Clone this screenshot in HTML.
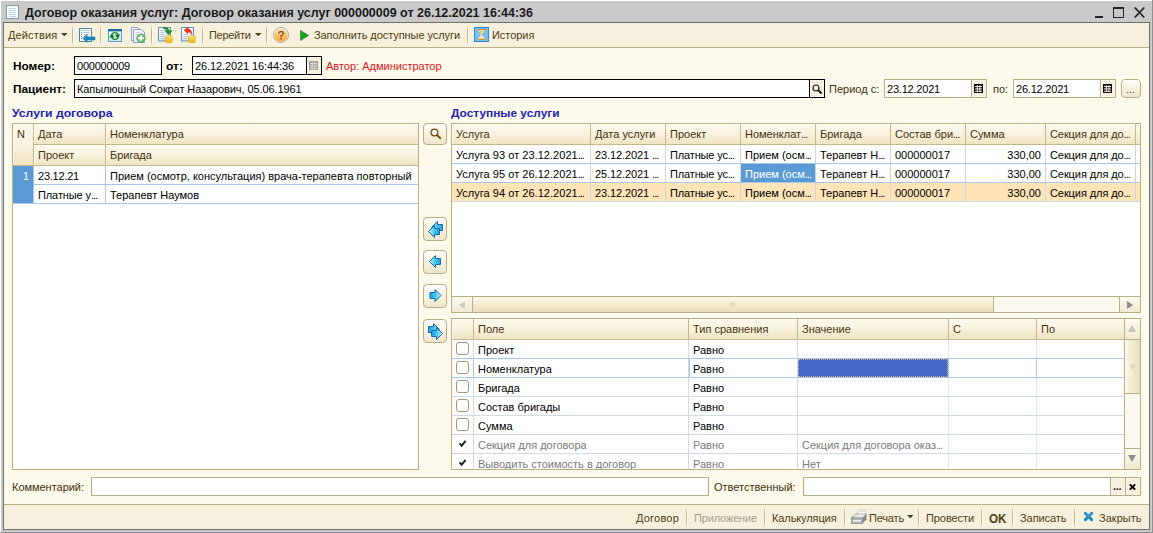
<!DOCTYPE html>
<html><head><meta charset="utf-8"><title>Договор оказания услуг</title>
<style>
*{box-sizing:border-box;margin:0;padding:0}
html,body{width:1153px;height:533px;overflow:hidden;background:#c8c8c8}
body{font-family:"Liberation Sans",sans-serif;font-size:11px;color:#000;position:relative}
.a{position:absolute}
.t{position:absolute;white-space:nowrap;line-height:13px;height:13px}
.b{font-weight:bold;letter-spacing:.45px}
.inp{position:absolute;background:#fff;border:1px solid #000}
.inp2{position:absolute;background:#fff;border:1px solid #b7ae84}
.hdr{position:absolute;background:linear-gradient(#fcf9ec 0%,#f8f2de 50%,#efe4c2 100%);box-shadow:inset 1px 1px 0 rgba(255,255,255,.7)}
.ht{color:#44320e}
.btn{position:absolute;border:1px solid #b8ae88;border-radius:4px;background:linear-gradient(#fffefa,#f7f1de 50%,#efe6cb);box-shadow:inset 0 1px 0 #fff}
.sep{position:absolute;width:1px;background:#d2c8a4}
.cb{position:absolute;width:13px;height:13px;border:1px solid #a0977a;border-radius:3px;background:#fff}
.tb{color:#4d3d12}
svg{position:absolute;overflow:visible}
</style></head><body>
<div class="a" style="left:0px;top:0px;width:1153px;height:533px;background:#c9c9c9;"></div>
<div class="a" style="left:0px;top:0px;width:1153px;height:1px;background:#ffffff;"></div>
<div class="a" style="left:0px;top:0px;width:1px;height:533px;background:#ffffff;"></div>
<div class="a" style="left:3px;top:22px;width:1147px;height:508px;background:#fcfaeb;border:1px solid #6f6f6f"></div>
<div class="a" style="left:1152px;top:0px;width:1px;height:533px;background:#909090;"></div>
<div class="a" style="left:0px;top:532px;width:1153px;height:1px;background:#909090;"></div>
<svg style="left:6px;top:5px" width="14" height="15" viewBox="0 0 14 15"><rect x="0.500" y="0.500" width="12" height="13" fill="#fdfeff" stroke="#8298b0"/><path d="M3 3.500h7M3 5.500h7M3 7.500h7M3 9.500h7M3 11.500h7" stroke="#bcd4e8" stroke-width="1"/></svg>
<div class="t " style="left:25px;top:6px;letter-spacing:0;transform:scaleX(1.0407);transform-origin:0 0;font-weight:bold;font-size:12px;line-height:15px;height:15px;color:#1a1a1a">Договор оказания услуг: Договор оказания услуг 000000009 от 26.12.2021 16:44:36</div>
<div class="a" style="left:1095px;top:16px;width:8px;height:2px;background:#222;"></div>
<div class="a" style="left:1113px;top:7px;width:11px;height:11px;background:transparent;border:1px solid #222;border-top:2px solid #222"></div>
<svg style="left:1134px;top:7px" width="11" height="11" viewBox="0 0 11 11"><path d="M0.700 0.500L10.300 10.500M10.300 0.500L0.700 10.500" stroke="#222" stroke-width="1.8" fill="none"/></svg>
<div class="a" style="left:4px;top:23px;width:1145px;height:24px;background:#f6f1dd;"></div>
<div class="a" style="left:4px;top:47px;width:1145px;height:1px;background:#b9b088;"></div>
<div class="t tb" style="left:8px;top:29px;letter-spacing:0.137px;">Действия</div>
<svg style="left:61px;top:33px" width="7" height="4" viewBox="0 0 7 4"><path d="M0 0h6.600L3.300 3.300z" fill="#4d3d12"/></svg>
<div class="a" style="left:72px;top:25px;width:1px;height:21px;background:linear-gradient(rgba(196,182,134,0),#c4b686 25%,#c4b686 75%,rgba(196,182,134,0));"></div>
<div class="a" style="left:73px;top:25px;width:1px;height:21px;background:linear-gradient(rgba(255,255,255,0),#fffdf5 25%,#fffdf5 75%,rgba(255,255,255,0));"></div>
<div class="a" style="left:100px;top:25px;width:1px;height:21px;background:linear-gradient(rgba(196,182,134,0),#c4b686 25%,#c4b686 75%,rgba(196,182,134,0));"></div>
<div class="a" style="left:101px;top:25px;width:1px;height:21px;background:linear-gradient(rgba(255,255,255,0),#fffdf5 25%,#fffdf5 75%,rgba(255,255,255,0));"></div>
<div class="a" style="left:151px;top:25px;width:1px;height:21px;background:linear-gradient(rgba(196,182,134,0),#c4b686 25%,#c4b686 75%,rgba(196,182,134,0));"></div>
<div class="a" style="left:152px;top:25px;width:1px;height:21px;background:linear-gradient(rgba(255,255,255,0),#fffdf5 25%,#fffdf5 75%,rgba(255,255,255,0));"></div>
<div class="a" style="left:202px;top:25px;width:1px;height:21px;background:linear-gradient(rgba(196,182,134,0),#c4b686 25%,#c4b686 75%,rgba(196,182,134,0));"></div>
<div class="a" style="left:203px;top:25px;width:1px;height:21px;background:linear-gradient(rgba(255,255,255,0),#fffdf5 25%,#fffdf5 75%,rgba(255,255,255,0));"></div>
<div class="a" style="left:266px;top:25px;width:1px;height:21px;background:linear-gradient(rgba(196,182,134,0),#c4b686 25%,#c4b686 75%,rgba(196,182,134,0));"></div>
<div class="a" style="left:267px;top:25px;width:1px;height:21px;background:linear-gradient(rgba(255,255,255,0),#fffdf5 25%,#fffdf5 75%,rgba(255,255,255,0));"></div>
<div class="a" style="left:467px;top:25px;width:1px;height:21px;background:linear-gradient(rgba(196,182,134,0),#c4b686 25%,#c4b686 75%,rgba(196,182,134,0));"></div>
<div class="a" style="left:468px;top:25px;width:1px;height:21px;background:linear-gradient(rgba(255,255,255,0),#fffdf5 25%,#fffdf5 75%,rgba(255,255,255,0));"></div>
<div class="t tb" style="left:209px;top:29px;letter-spacing:-0.299px;">Перейти</div>
<svg style="left:255px;top:33px" width="7" height="4" viewBox="0 0 7 4"><path d="M0 0h6.600L3.300 3.300z" fill="#4d3d12"/></svg>
<div class="t tb" style="left:314px;top:29px;letter-spacing:-0.070px;">Заполнить доступные услуги</div>
<div class="t tb" style="left:492px;top:29px;letter-spacing:-0.053px;">История</div>
<svg style="left:78px;top:27px" width="18" height="17" viewBox="0 0 18 17"><rect x="1.500" y="1.500" width="12" height="13" fill="#fbfdfe" stroke="#4f82ab"/><path d="M5.500 3.500h6M5.500 5.500h6M5.500 7.500h6M5.500 9.500h6M5.500 11.500h6" stroke="#b9c6d2"/><path d="M3 3.500h1.200M3 5.500h1.200M3 7.500h1.200M3 9.500h1.200M3 11.500h1.200" stroke="#3f8fd0"/><path d="M5 11.500L9 7.500V10H17V13H9V15.500z" fill="#1b86bf" stroke="#13709f" stroke-width=".5"/></svg>
<svg style="left:108px;top:29px" width="14" height="13" viewBox="0 0 14 13"><defs><linearGradient id="g2" x1="0" y1="0" x2="0" y2="1"><stop offset="0" stop-color="#ffffff"/><stop offset="1" stop-color="#cfe3f3"/></linearGradient></defs><rect x="0.500" y="0.500" width="13" height="12" fill="url(#g2)" stroke="#5e9ccd"/><rect x="0" y="0" width="14" height="2.400" fill="#1c6c9e"/><circle cx="7" cy="7" r="3.300" fill="none" stroke="#1d8a2c" stroke-width="1.200"/><path d="M1.200 8.400h5.400L3.900 4.400z" fill="#0b7a1c"/><path d="M6.800 5.500h5.400L9.500 9.400z" fill="#0b7a1c"/></svg>
<svg style="left:131px;top:27px" width="15" height="17" viewBox="0 0 15 17"><defs><linearGradient id="g3" x1="0" y1="0" x2="1" y2="1"><stop offset="0" stop-color="#ffffff"/><stop offset="1" stop-color="#d5e3ef"/></linearGradient></defs><path d="M0.500 0.500h6l2.500 2.500v10.500h-8.500z" fill="url(#g3)" stroke="#8aa4bf"/><path d="M2.500 2.500h8l3 3v10h-11z" fill="url(#g3)" stroke="#8aa4bf"/><path d="M4.500 5.500h4M4.500 7.500h3" stroke="#c3d0dc"/><circle cx="10" cy="11.300" r="4.200" fill="#68c068" stroke="#6f9a72" stroke-width=".9"/><path d="M10 8.500v5.600M7.200 11.300h5.600" stroke="#fff" stroke-width="2.100"/></svg>
<svg style="left:158px;top:27px" width="16" height="17" viewBox="0 0 16 17"><defs><linearGradient id="gd" x1="0" y1="0" x2="0" y2="1"><stop offset="0" stop-color="#ffffff"/><stop offset="1" stop-color="#d6e4ee"/></linearGradient></defs><rect x="0.500" y="0.500" width="12" height="13.500" fill="url(#gd)" stroke="#6c95b6"/><path d="M2.500 3.500h5M2.500 5.500h4M2.500 7.500h4M2.500 9.500h4M2.500 11.500h4" stroke="#b2c4d4"/><path d="M5.500 0.300C9 0 10.900 1.500 11.100 3.700H14.300L10.500 8.100 6.800 3.700H9C8.800 2.500 7.500 1.700 5.500 1.700z" fill="#15982a" stroke="#0c7a1c" stroke-width=".4"/><ellipse cx="10.900" cy="14.300" rx="3.600" ry="1.600" fill="#f9c422" stroke="#d9a012" stroke-width=".6"/><ellipse cx="10.900" cy="12.300" rx="3.600" ry="1.600" fill="#ffd535" stroke="#d9a012" stroke-width=".6"/><ellipse cx="10.900" cy="10.300" rx="3.600" ry="1.600" fill="#ffe25c" stroke="#d9a012" stroke-width=".6"/></svg>
<svg style="left:181px;top:27px" width="16" height="17" viewBox="0 0 16 17"><defs><linearGradient id="gd" x1="0" y1="0" x2="0" y2="1"><stop offset="0" stop-color="#ffffff"/><stop offset="1" stop-color="#d6e4ee"/></linearGradient></defs><rect x="0.500" y="0.500" width="12" height="13.500" fill="url(#gd)" stroke="#6c95b6"/><path d="M2.500 7.500h4M2.500 9.500h4M2.500 11.500h4" stroke="#b2c4d4"/><path d="M3 3.300L7 0V2C9.900 2 11.100 4.500 10.800 7.700 10 5.700 8.800 4.900 7 4.900V6.800z" fill="#f2341c" stroke="#d42410" stroke-width=".4"/><ellipse cx="10.900" cy="14.300" rx="3.600" ry="1.600" fill="#f9c422" stroke="#d9a012" stroke-width=".6"/><ellipse cx="10.900" cy="12.300" rx="3.600" ry="1.600" fill="#ffd535" stroke="#d9a012" stroke-width=".6"/><ellipse cx="10.900" cy="10.300" rx="3.600" ry="1.600" fill="#ffe25c" stroke="#d9a012" stroke-width=".6"/></svg>
<svg style="left:273px;top:27px" width="16" height="16" viewBox="0 0 16 16"><defs><linearGradient id="hg" x1="0" y1="0" x2="0" y2="1"><stop offset="0" stop-color="#ffe6c0"/><stop offset=".55" stop-color="#ffc46e"/><stop offset="1" stop-color="#ff9f2e"/></linearGradient></defs><circle cx="8" cy="8" r="7.500" fill="#fff" stroke="#a3a3aa" stroke-width=".9"/><circle cx="8" cy="8" r="6.800" fill="url(#hg)"/><text x="8" y="12" text-anchor="middle" font-family="Liberation Sans,sans-serif" font-size="11" fill="#7a4a22" stroke="#7a4a22" stroke-width=".35">?</text></svg>
<svg style="left:300px;top:30px" width="9" height="11" viewBox="0 0 9 11"><path d="M0.500 0.500L8.700 5.500 0.500 10.500z" fill="#11ab11" stroke="#4f6f4f" stroke-width=".7"/></svg>
<svg style="left:474px;top:27px" width="15" height="15" viewBox="0 0 15 15"><rect x="0.500" y="0.500" width="14" height="14" fill="#7cc0ea" stroke="#2a8be0"/><path d="M4.500 3h6v1.200L8.200 7.200v.8l2.300 2.800V12h-6v-1.200L6.800 8v-.8L4.500 4.200z" fill="#f4f4ee" stroke="#9a9a90" stroke-width=".4"/><path d="M5.300 4h4.400L7.500 7.200zM6 11.500l1.500-2 1.500 2z" fill="#d6d236"/><path d="M4 2.500h7M4 12.500h7" stroke="#e08a1c" stroke-width="1.200"/></svg>
<div class="t b" style="left:13px;top:60px;letter-spacing:0;transform:scaleX(1.0726);transform-origin:0 0;">Номер:</div>
<div class="a" style="left:74px;top:56px;width:88px;height:19px;background:#fff;border:1px solid #000"></div>
<div class="t " style="left:77px;top:60px;letter-spacing:-0.229px;">000000009</div>
<div class="t b" style="left:166px;top:60px;letter-spacing:0;transform:scaleX(1.0968);transform-origin:0 0;">от:</div>
<div class="a" style="left:192px;top:56px;width:130px;height:19px;background:#fff;border:1px solid #000"></div>
<div class="t " style="left:195px;top:60px;letter-spacing:-0.102px;">26.12.2021 16:44:36</div>
<div class="a" style="left:306px;top:57px;width:15px;height:17px;background:#f5f0de;border-left:1px solid #000;box-shadow:inset 1px 1px 0 #faf7ea,inset -1px -1px 0 #faf7ea"></div>
<svg style="left:309px;top:61px" width="9" height="9" viewBox="0 0 9 9"><rect x="0" y="0" width="9" height="9" fill="#a2a2a2"/><path d="M3.300 1v7.500M5.900 1v7.500M1 2.500h7M1 4.900h7M1 7.300h7" stroke="#d9d9d9" stroke-width=".9"/></svg>
<div class="t " style="left:326px;top:60px;color:#e0141e">Автор: Администратор</div>
<div class="t b" style="left:13px;top:83px;letter-spacing:0;transform:scaleX(1.0734);transform-origin:0 0;">Пациент:</div>
<div class="a" style="left:74px;top:79px;width:751px;height:19px;background:#fff;border:1px solid #000"></div>
<div class="t " style="left:77px;top:83px;letter-spacing:-0.096px;">Капылюшный Сократ Назарович, 05.06.1961</div>
<div class="a" style="left:809px;top:80px;width:15px;height:17px;background:#f5f0de;border-left:1px solid #000;box-shadow:inset 1px 1px 0 #faf7ea,inset -1px -1px 0 #faf7ea"></div>
<svg style="left:811.500px;top:83.500px" width="11" height="11" viewBox="0 0 11 11"><circle cx="4" cy="4" r="3" fill="none" stroke="#111" stroke-width="1.200"/><path d="M6.200 6.200L9.500 9.500" stroke="#111" stroke-width="1.800"/></svg>
<div class="t " style="left:829px;top:83px;color:#3f3012">Период с:</div>
<div class="a" style="left:884px;top:79px;width:103px;height:19px;background:#fff;border:1px solid #b7ae84"></div>
<div class="t " style="left:887px;top:83px;letter-spacing:-0.206px;">23.12.2021</div>
<div class="a" style="left:971px;top:80px;width:15px;height:17px;background:#f5f0de;border-left:1px solid #b7ae84;box-shadow:inset 1px 1px 0 #faf7ea,inset -1px -1px 0 #faf7ea"></div>
<svg style="left:974px;top:84px" width="9" height="9" viewBox="0 0 9 9"><rect x="0" y="0" width="9" height="9" fill="#0a0a0a"/><path d="M3.300 1.200v7M5.900 1.200v7M1 2.500h7M1 4.900h7M1 7.300h7" stroke="#fff" stroke-width=".9"/></svg>
<div class="t " style="left:993px;top:83px;color:#3f3012">по:</div>
<div class="a" style="left:1013px;top:79px;width:103px;height:19px;background:#fff;border:1px solid #b7ae84"></div>
<div class="t " style="left:1016px;top:83px;letter-spacing:-0.206px;">26.12.2021</div>
<div class="a" style="left:1100px;top:80px;width:15px;height:17px;background:#f5f0de;border-left:1px solid #b7ae84;box-shadow:inset 1px 1px 0 #faf7ea,inset -1px -1px 0 #faf7ea"></div>
<svg style="left:1103px;top:84px" width="9" height="9" viewBox="0 0 9 9"><rect x="0" y="0" width="9" height="9" fill="#0a0a0a"/><path d="M3.300 1.200v7M5.900 1.200v7M1 2.500h7M1 4.900h7M1 7.300h7" stroke="#fff" stroke-width=".9"/></svg>
<div class="btn" style="left:1121px;top:79px;width:20px;height:19px"></div>
<div class="t " style="left:1126px;top:83px;color:#5a4a2a">...</div>
<div class="t b" style="left:12px;top:107px;letter-spacing:0;transform:scaleX(1.1084);transform-origin:0 0;color:#2222b4">Услуги договора</div>
<div class="t b" style="left:451px;top:107px;letter-spacing:0;transform:scaleX(1.0788);transform-origin:0 0;color:#2222b4">Доступные услуги</div>
<div class="a" style="left:12px;top:123px;width:407px;height:347px;background:#fff;border:1px solid #b9ae84"></div>
<div class="hdr" style="left:13px;top:124px;width:20px;height:41px"></div>
<div class="hdr" style="left:34px;top:124px;width:71px;height:20px"></div>
<div class="hdr" style="left:106px;top:124px;width:312px;height:20px"></div>
<div class="hdr" style="left:34px;top:145px;width:71px;height:20px"></div>
<div class="hdr" style="left:106px;top:145px;width:312px;height:20px"></div>
<div class="a" style="left:33px;top:124px;width:1px;height:41px;background:#c5b88b;"></div>
<div class="a" style="left:105px;top:124px;width:1px;height:41px;background:#c5b88b;"></div>
<div class="a" style="left:34px;top:144px;width:384px;height:1px;background:#c5b88b;"></div>
<div class="a" style="left:13px;top:165px;width:405px;height:1px;background:#c5b88b;"></div>
<div class="t ht" style="left:17px;top:128px;">N</div>
<div class="t ht" style="left:38px;top:128px;">Дата</div>
<div class="t ht" style="left:110px;top:128px;">Номенклатура</div>
<div class="t ht" style="left:38px;top:149px;">Проект</div>
<div class="t ht" style="left:110px;top:149px;">Бригада</div>
<div class="a" style="left:13px;top:166px;width:20px;height:37px;background:#5b9bd5;"></div>
<div class="t " style="left:13px;top:170px;width:16px;overflow:hidden;color:#fff;text-align:right">1</div>
<div class="a" style="left:33px;top:166px;width:1px;height:37px;background:#a9c7ea;"></div>
<div class="a" style="left:105px;top:166px;width:1px;height:37px;background:#a9c7ea;"></div>
<div class="a" style="left:34px;top:184px;width:384px;height:1px;background:#a9c7ea;"></div>
<div class="a" style="left:13px;top:203px;width:405px;height:1px;background:#a9c7ea;"></div>
<div class="t " style="left:38px;top:170px;letter-spacing:-0.229px;">23.12.21</div>
<div class="t " style="left:110px;top:170px;">Прием (осмотр, консультация) врача-терапевта повторный</div>
<div class="t " style="left:38px;top:189px;width:66px;overflow:hidden;letter-spacing:-0.107px;">Платные у<span style="letter-spacing:-1px">...</span></div>
<div class="t " style="left:110px;top:189px;">Терапевт Наумов</div>
<div class="btn" style="left:423px;top:123px;width:24px;height:22px"></div>
<svg style="left:429.500px;top:128.300px" width="12" height="12" viewBox="0 0 12 12"><circle cx="4.500" cy="4.500" r="3.400" fill="none" stroke="#6b4c0c" stroke-width="1.200"/><path d="M7 7L10.200 10.200" stroke="#6b4c0c" stroke-width="1.900" stroke-linecap="round"/></svg>
<div class="btn" style="left:423px;top:217px;width:24px;height:24px"></div>
<div class="btn" style="left:423px;top:250px;width:24px;height:24px"></div>
<div class="btn" style="left:423px;top:284px;width:24px;height:24px"></div>
<div class="btn" style="left:423px;top:319px;width:24px;height:24px"></div>
<svg width="0" height="0" style="left:0;top:0"><defs><linearGradient id="ag" x1="0" y1="0" x2="1" y2="0"><stop offset="0" stop-color="#d6f6ff"/><stop offset=".5" stop-color="#48c9f5"/><stop offset="1" stop-color="#1a9fe2"/></linearGradient></defs></svg>
<svg style="left:428px;top:221px" width="16" height="17" viewBox="0 0 16 17"><g transform="translate(3,0)"><path d="M0.500 6.500L6.500 0.500V3.500H11.500V9.500H6.500V12.500z" fill="url(#ag)" stroke="#1b68a6" stroke-width="1" stroke-linejoin="round"/></g><g transform="translate(0,4)"><path d="M0.500 6.500L6.500 0.500V3.500H11.500V9.500H6.500V12.500z" fill="url(#ag)" stroke="#1b68a6" stroke-width="1" stroke-linejoin="round"/></g></svg>
<svg style="left:429px;top:255px" width="13" height="13" viewBox="0 0 13 13"><g transform="translate(0,0)"><path d="M0.500 6.500L6.500 0.500V3.500H11.500V9.500H6.500V12.500z" fill="url(#ag)" stroke="#1b68a6" stroke-width="1" stroke-linejoin="round"/></g></svg>
<svg style="left:429px;top:289px" width="13" height="13" viewBox="0 0 13 13"><g transform="translate(12.500,0) scale(-1,1)"><g transform="translate(0,0)"><path d="M0.500 6.500L6.500 0.500V3.500H11.500V9.500H6.500V12.500z" fill="url(#ag)" stroke="#1b68a6" stroke-width="1" stroke-linejoin="round"/></g></g></svg>
<svg style="left:428px;top:323px" width="16" height="17" viewBox="0 0 16 17"><g transform="translate(15,0) scale(-1,1)"><g transform="translate(3,0)"><path d="M0.500 6.500L6.500 0.500V3.500H11.500V9.500H6.500V12.500z" fill="url(#ag)" stroke="#1b68a6" stroke-width="1" stroke-linejoin="round"/></g><g transform="translate(0,4)"><path d="M0.500 6.500L6.500 0.500V3.500H11.500V9.500H6.500V12.500z" fill="url(#ag)" stroke="#1b68a6" stroke-width="1" stroke-linejoin="round"/></g></g></svg>
<div class="a" style="left:451px;top:123px;width:690px;height:190px;background:#fff;border:1px solid #b9ae84"></div>
<div class="hdr" style="left:452px;top:124px;width:688px;height:20px"></div>
<div class="a" style="left:452px;top:144px;width:688px;height:1px;background:#c5b88b;"></div>
<div class="t ht" style="left:456px;top:128px;width:134px;overflow:hidden;">Услуга</div>
<div class="t ht" style="left:595px;top:128px;width:70px;overflow:hidden;">Дата услуги</div>
<div class="t ht" style="left:670px;top:128px;width:70px;overflow:hidden;">Проект</div>
<div class="t ht" style="left:745px;top:128px;width:70px;overflow:hidden;">Номенклат<span style="letter-spacing:-1px">...</span></div>
<div class="t ht" style="left:820px;top:128px;width:70px;overflow:hidden;">Бригада</div>
<div class="t ht" style="left:895px;top:128px;width:70px;overflow:hidden;">Состав бри<span style="letter-spacing:-1px">...</span></div>
<div class="t ht" style="left:970px;top:128px;width:75px;overflow:hidden;">Сумма</div>
<div class="t ht" style="left:1050px;top:128px;width:85px;overflow:hidden;letter-spacing:-0.087px;">Секция для до<span style="letter-spacing:-1px">...</span></div>
<div class="a" style="left:590px;top:124px;width:1px;height:20px;background:#c5b88b;"></div>
<div class="a" style="left:665px;top:124px;width:1px;height:20px;background:#c5b88b;"></div>
<div class="a" style="left:740px;top:124px;width:1px;height:20px;background:#c5b88b;"></div>
<div class="a" style="left:815px;top:124px;width:1px;height:20px;background:#c5b88b;"></div>
<div class="a" style="left:890px;top:124px;width:1px;height:20px;background:#c5b88b;"></div>
<div class="a" style="left:965px;top:124px;width:1px;height:20px;background:#c5b88b;"></div>
<div class="a" style="left:1045px;top:124px;width:1px;height:20px;background:#c5b88b;"></div>
<div class="a" style="left:1135px;top:124px;width:1px;height:20px;background:#c5b88b;"></div>
<div class="a" style="left:452px;top:183px;width:688px;height:18px;background:#ffe4b8;"></div>
<div class="a" style="left:741px;top:164px;width:74px;height:18px;background:#5b9bd5;"></div>
<div class="a" style="left:590px;top:145px;width:1px;height:56px;background:#c8d6e6;"></div>
<div class="a" style="left:665px;top:145px;width:1px;height:56px;background:#c8d6e6;"></div>
<div class="a" style="left:740px;top:145px;width:1px;height:56px;background:#c8d6e6;"></div>
<div class="a" style="left:815px;top:145px;width:1px;height:56px;background:#c8d6e6;"></div>
<div class="a" style="left:890px;top:145px;width:1px;height:56px;background:#c8d6e6;"></div>
<div class="a" style="left:965px;top:145px;width:1px;height:56px;background:#c8d6e6;"></div>
<div class="a" style="left:1045px;top:145px;width:1px;height:56px;background:#c8d6e6;"></div>
<div class="a" style="left:1135px;top:145px;width:1px;height:56px;background:#c8d6e6;"></div>
<div class="a" style="left:452px;top:163px;width:688px;height:1px;background:#a9c7ea;"></div>
<div class="a" style="left:452px;top:182px;width:688px;height:1px;background:#a9c7ea;"></div>
<div class="a" style="left:452px;top:201px;width:688px;height:1px;background:#c9d9ec;"></div>
<div class="t " style="left:456px;top:149px;width:132px;overflow:hidden;letter-spacing:0.034px;">Услуга 93 от 23.12.2021<span style="letter-spacing:-1px">...</span></div>
<div class="t " style="left:595px;top:149px;width:68px;overflow:hidden;letter-spacing:-0.093px;">23.12.2021 <span style="letter-spacing:-1px">...</span></div>
<div class="t " style="left:670px;top:149px;width:68px;overflow:hidden;letter-spacing:-0.150px;">Платные ус<span style="letter-spacing:-1px">...</span></div>
<div class="t " style="left:745px;top:149px;width:68px;overflow:hidden;">Прием (осм<span style="letter-spacing:-1px">...</span></div>
<div class="t " style="left:820px;top:149px;width:68px;overflow:hidden;">Терапевт Н<span style="letter-spacing:-1px">...</span></div>
<div class="t " style="left:895px;top:149px;width:68px;overflow:hidden;">000000017</div>
<div class="t " style="left:970px;top:149px;width:71px;overflow:hidden;text-align:right;">330,00</div>
<div class="t " style="left:1050px;top:149px;width:83px;overflow:hidden;letter-spacing:-0.087px;">Секция для до<span style="letter-spacing:-1px">...</span></div>
<div class="t " style="left:456px;top:168px;width:132px;overflow:hidden;letter-spacing:0.034px;">Услуга 95 от 26.12.2021<span style="letter-spacing:-1px">...</span></div>
<div class="t " style="left:595px;top:168px;width:68px;overflow:hidden;letter-spacing:-0.093px;">25.12.2021 <span style="letter-spacing:-1px">...</span></div>
<div class="t " style="left:670px;top:168px;width:68px;overflow:hidden;letter-spacing:-0.150px;">Платные ус<span style="letter-spacing:-1px">...</span></div>
<div class="t " style="left:745px;top:168px;width:68px;overflow:hidden;color:#fff;">Прием (осм<span style="letter-spacing:-1px">...</span></div>
<div class="t " style="left:820px;top:168px;width:68px;overflow:hidden;">Терапевт Н<span style="letter-spacing:-1px">...</span></div>
<div class="t " style="left:895px;top:168px;width:68px;overflow:hidden;">000000017</div>
<div class="t " style="left:970px;top:168px;width:71px;overflow:hidden;text-align:right;">330,00</div>
<div class="t " style="left:1050px;top:168px;width:83px;overflow:hidden;letter-spacing:-0.087px;">Секция для до<span style="letter-spacing:-1px">...</span></div>
<div class="t " style="left:456px;top:187px;width:132px;overflow:hidden;letter-spacing:0.034px;">Услуга 94 от 26.12.2021<span style="letter-spacing:-1px">...</span></div>
<div class="t " style="left:595px;top:187px;width:68px;overflow:hidden;letter-spacing:-0.093px;">23.12.2021 <span style="letter-spacing:-1px">...</span></div>
<div class="t " style="left:670px;top:187px;width:68px;overflow:hidden;letter-spacing:-0.150px;">Платные ус<span style="letter-spacing:-1px">...</span></div>
<div class="t " style="left:745px;top:187px;width:68px;overflow:hidden;">Прием (осм<span style="letter-spacing:-1px">...</span></div>
<div class="t " style="left:820px;top:187px;width:68px;overflow:hidden;">Терапевт Н<span style="letter-spacing:-1px">...</span></div>
<div class="t " style="left:895px;top:187px;width:68px;overflow:hidden;">000000017</div>
<div class="t " style="left:970px;top:187px;width:71px;overflow:hidden;text-align:right;">330,00</div>
<div class="t " style="left:1050px;top:187px;width:83px;overflow:hidden;letter-spacing:-0.087px;">Секция для до<span style="letter-spacing:-1px">...</span></div>
<div class="a" style="left:452px;top:296px;width:688px;height:16px;background:#fbf8ee;border-top:1px solid #b9ae84"></div>
<div class="a" style="left:452px;top:297px;width:20px;height:15px;background:linear-gradient(#fcf9ee,#f1ead2);"></div>
<div class="a" style="left:472px;top:297px;width:1px;height:15px;background:#b9ae84;"></div>
<div class="a" style="left:473px;top:297px;width:520px;height:15px;background:linear-gradient(#fbf8ec,#f2ecd0 50%,#e6ddb9);"></div>
<div class="a" style="left:993px;top:297px;width:1px;height:15px;background:#b9ae84;"></div>
<div class="a" style="left:1119px;top:297px;width:1px;height:15px;background:#b9ae84;"></div>
<div class="a" style="left:1120px;top:297px;width:20px;height:15px;background:linear-gradient(#fcf9ee,#f1ead2);"></div>
<svg style="left:459px;top:301px" width="6" height="8" viewBox="0 0 6 8"><path d="M6 0v8L0 4z" fill="#cfcfc8"/></svg>
<svg style="left:1127px;top:301px" width="6" height="8" viewBox="0 0 6 8"><path d="M0 0v8L6 4z" fill="#8c8c8c"/></svg>
<svg style="left:730px;top:302px" width="5" height="5" viewBox="0 0 5 5"><circle cx="2.500" cy="2.500" r="1.700" fill="none" stroke="#c9c0a4" stroke-width="1"/></svg>
<div class="a" style="left:451px;top:318px;width:690px;height:152px;background:#fff;border:1px solid #b9ae84"></div>
<div class="hdr" style="left:452px;top:319px;width:672px;height:20px"></div>
<div class="a" style="left:452px;top:339px;width:688px;height:1px;background:#c5b88b;"></div>
<div class="a" style="left:473px;top:319px;width:1px;height:20px;background:#c5b88b;"></div>
<div class="a" style="left:688px;top:319px;width:1px;height:20px;background:#c5b88b;"></div>
<div class="a" style="left:797px;top:319px;width:1px;height:20px;background:#c5b88b;"></div>
<div class="a" style="left:948px;top:319px;width:1px;height:20px;background:#c5b88b;"></div>
<div class="a" style="left:1036px;top:319px;width:1px;height:20px;background:#c5b88b;"></div>
<div class="a" style="left:1124px;top:319px;width:1px;height:20px;background:#c5b88b;"></div>
<div class="t ht" style="left:478px;top:323px;">Поле</div>
<div class="t ht" style="left:693px;top:323px;">Тип сравнения</div>
<div class="t ht" style="left:802px;top:323px;">Значение</div>
<div class="t ht" style="left:953px;top:323px;">С</div>
<div class="t ht" style="left:1041px;top:323px;">По</div>
<div class="a" style="left:473px;top:340px;width:1px;height:129px;background:#cfdceb;"></div>
<div class="a" style="left:688px;top:340px;width:1px;height:129px;background:#cfdceb;"></div>
<div class="a" style="left:797px;top:340px;width:1px;height:129px;background:#cfdceb;"></div>
<div class="a" style="left:948px;top:340px;width:1px;height:129px;background:#e4e8ec;"></div>
<div class="a" style="left:1036px;top:340px;width:1px;height:129px;background:#e4e8ec;"></div>
<div class="a" style="left:452px;top:358px;width:672px;height:1px;background:#cfdbe6;"></div>
<div class="a" style="left:452px;top:377px;width:672px;height:1px;background:#cfdbe6;"></div>
<div class="a" style="left:452px;top:396px;width:672px;height:1px;background:#cfdbe6;"></div>
<div class="a" style="left:452px;top:415px;width:672px;height:1px;background:#cfdbe6;"></div>
<div class="a" style="left:452px;top:434px;width:672px;height:1px;background:#cfdbe6;"></div>
<div class="a" style="left:452px;top:453px;width:672px;height:1px;background:#cfdbe6;"></div>
<div class="a" style="left:452px;top:358px;width:672px;height:1px;background:#a9c7ea;"></div>
<div class="a" style="left:452px;top:377px;width:672px;height:1px;background:#a9c7ea;"></div>
<div class="a" style="left:948px;top:359px;width:1px;height:18px;background:#a9c7ea;"></div>
<div class="a" style="left:1036px;top:359px;width:1px;height:18px;background:#a9c7ea;"></div>
<div class="a" style="left:473px;top:359px;width:1px;height:18px;background:#a9c7ea;"></div>
<div class="a" style="left:689px;top:359px;width:1px;height:18px;background:#a9c7ea;"></div>
<div class="a" style="left:798px;top:359px;width:150px;height:18px;background:#4668c5;border:1px dotted #c9b36a"></div>
<div class="t " style="left:478px;top:344px;">Проект</div>
<div class="t " style="left:693px;top:344px;">Равно</div>
<div class="cb" style="left:456px;top:342px"></div>
<div class="t " style="left:478px;top:363px;">Номенклатура</div>
<div class="t " style="left:693px;top:363px;">Равно</div>
<div class="cb" style="left:456px;top:361px"></div>
<div class="t " style="left:478px;top:382px;">Бригада</div>
<div class="t " style="left:693px;top:382px;">Равно</div>
<div class="cb" style="left:456px;top:380px"></div>
<div class="t " style="left:478px;top:401px;">Состав бригады</div>
<div class="t " style="left:693px;top:401px;">Равно</div>
<div class="cb" style="left:456px;top:399px"></div>
<div class="t " style="left:478px;top:420px;">Сумма</div>
<div class="t " style="left:693px;top:420px;">Равно</div>
<div class="cb" style="left:456px;top:418px"></div>
<div class="t " style="left:478px;top:439px;color:#7a7a7a;">Секция для договора</div>
<div class="t " style="left:693px;top:439px;color:#7a7a7a;">Равно</div>
<svg style="left:459px;top:440px" width="7" height="7" viewBox="0 0 7 7"><path d="M0.600 3.300L2.700 5.700 6.600 0.800" fill="none" stroke="#222" stroke-width="1.900"/></svg>
<div class="t " style="left:478px;top:458px;color:#7a7a7a;">Выводить стоимость в договор</div>
<div class="t " style="left:693px;top:458px;color:#7a7a7a;">Равно</div>
<svg style="left:459px;top:459px" width="7" height="7" viewBox="0 0 7 7"><path d="M0.600 3.300L2.700 5.700 6.600 0.800" fill="none" stroke="#222" stroke-width="1.900"/></svg>
<div class="t " style="left:802px;top:439px;color:#7a7a7a">Секция для договора оказ<span style="letter-spacing:-1px">...</span></div>
<div class="t " style="left:802px;top:458px;color:#7a7a7a">Нет</div>
<div class="a" style="left:452px;top:469px;width:688px;height:1px;background:#b9ae84;"></div>
<div class="a" style="left:451px;top:470px;width:690px;height:7px;background:#fcfaeb;"></div>
<div class="a" style="left:1125px;top:319px;width:15px;height:150px;background:#fbf8ee;"></div>
<div class="a" style="left:1124px;top:319px;width:1px;height:150px;background:#b9ae84;"></div>
<div class="a" style="left:1125px;top:319px;width:15px;height:20px;background:linear-gradient(#fcf9ee,#f1ead2);"></div>
<div class="a" style="left:1125px;top:339px;width:15px;height:1px;background:#b9ae84;"></div>
<div class="a" style="left:1125px;top:340px;width:15px;height:53px;background:linear-gradient(90deg,#fbf8ec,#f2ecd0 50%,#e6ddb9);"></div>
<div class="a" style="left:1125px;top:393px;width:15px;height:1px;background:#b9ae84;"></div>
<div class="a" style="left:1125px;top:448px;width:15px;height:1px;background:#b9ae84;"></div>
<div class="a" style="left:1125px;top:449px;width:15px;height:20px;background:linear-gradient(#fcf9ee,#f1ead2);"></div>
<svg style="left:1128px;top:325px" width="8" height="7" viewBox="0 0 8 7"><path d="M0 7h8L4 0z" fill="#c4c4c4"/></svg>
<svg style="left:1128px;top:455px" width="8" height="7" viewBox="0 0 8 7"><path d="M0 0h8L4 7z" fill="#8c8c8c"/></svg>
<svg style="left:1130px;top:364px" width="5" height="5" viewBox="0 0 5 5"><circle cx="2.500" cy="2.500" r="1.700" fill="none" stroke="#c9c0a4" stroke-width="1"/></svg>
<div class="t " style="left:12px;top:481px;letter-spacing:-0.029px;color:#3f3012">Комментарий:</div>
<div class="a" style="left:91px;top:477px;width:618px;height:19px;background:#fff;border:1px solid #b7ae84"></div>
<div class="t " style="left:714px;top:481px;letter-spacing:-0.002px;color:#3f3012">Ответственный:</div>
<div class="a" style="left:803px;top:477px;width:338px;height:19px;background:#fff;border:1px solid #b7ae84"></div>
<div class="a" style="left:1110px;top:478px;width:15px;height:17px;background:#f5f0de;border-left:1px solid #b7ae84;box-shadow:inset 1px 1px 0 #faf7ea,inset -1px -1px 0 #faf7ea"></div>
<div class="a" style="left:1125px;top:478px;width:15px;height:17px;background:#f5f0de;border-left:1px solid #b7ae84;box-shadow:inset 1px 1px 0 #faf7ea,inset -1px -1px 0 #faf7ea"></div>
<div class="t " style="left:1113px;top:480px;color:#111;font-weight:bold;letter-spacing:-.3px">...</div>
<svg style="left:1129px;top:484px" width="7" height="6" viewBox="0 0 7 6"><path d="M0.800 0.300L6.200 5.700M6.200 0.300L0.800 5.700" stroke="#000" stroke-width="1.900"/></svg>
<div class="a" style="left:4px;top:504px;width:1145px;height:1px;background:#b9b088;"></div>
<div class="a" style="left:4px;top:505px;width:1145px;height:24px;background:#f6f1dd;"></div>
<div class="a" style="left:686px;top:507px;width:1px;height:21px;background:linear-gradient(rgba(196,182,134,0),#c4b686 25%,#c4b686 75%,rgba(196,182,134,0));"></div>
<div class="a" style="left:687px;top:507px;width:1px;height:21px;background:linear-gradient(rgba(255,255,255,0),#fffdf5 25%,#fffdf5 75%,rgba(255,255,255,0));"></div>
<div class="a" style="left:764px;top:507px;width:1px;height:21px;background:linear-gradient(rgba(196,182,134,0),#c4b686 25%,#c4b686 75%,rgba(196,182,134,0));"></div>
<div class="a" style="left:765px;top:507px;width:1px;height:21px;background:linear-gradient(rgba(255,255,255,0),#fffdf5 25%,#fffdf5 75%,rgba(255,255,255,0));"></div>
<div class="a" style="left:844px;top:507px;width:1px;height:21px;background:linear-gradient(rgba(196,182,134,0),#c4b686 25%,#c4b686 75%,rgba(196,182,134,0));"></div>
<div class="a" style="left:845px;top:507px;width:1px;height:21px;background:linear-gradient(rgba(255,255,255,0),#fffdf5 25%,#fffdf5 75%,rgba(255,255,255,0));"></div>
<div class="a" style="left:918px;top:507px;width:1px;height:21px;background:linear-gradient(rgba(196,182,134,0),#c4b686 25%,#c4b686 75%,rgba(196,182,134,0));"></div>
<div class="a" style="left:919px;top:507px;width:1px;height:21px;background:linear-gradient(rgba(255,255,255,0),#fffdf5 25%,#fffdf5 75%,rgba(255,255,255,0));"></div>
<div class="a" style="left:981px;top:507px;width:1px;height:21px;background:linear-gradient(rgba(196,182,134,0),#c4b686 25%,#c4b686 75%,rgba(196,182,134,0));"></div>
<div class="a" style="left:982px;top:507px;width:1px;height:21px;background:linear-gradient(rgba(255,255,255,0),#fffdf5 25%,#fffdf5 75%,rgba(255,255,255,0));"></div>
<div class="a" style="left:1012px;top:507px;width:1px;height:21px;background:linear-gradient(rgba(196,182,134,0),#c4b686 25%,#c4b686 75%,rgba(196,182,134,0));"></div>
<div class="a" style="left:1013px;top:507px;width:1px;height:21px;background:linear-gradient(rgba(255,255,255,0),#fffdf5 25%,#fffdf5 75%,rgba(255,255,255,0));"></div>
<div class="a" style="left:1074px;top:507px;width:1px;height:21px;background:linear-gradient(rgba(196,182,134,0),#c4b686 25%,#c4b686 75%,rgba(196,182,134,0));"></div>
<div class="a" style="left:1075px;top:507px;width:1px;height:21px;background:linear-gradient(rgba(255,255,255,0),#fffdf5 25%,#fffdf5 75%,rgba(255,255,255,0));"></div>
<div class="t tb" style="left:636px;top:512px;letter-spacing:0.208px;">Договор</div>
<div class="t " style="left:694px;top:512px;letter-spacing:-0.153px;color:#a9a08a">Приложение</div>
<div class="t tb" style="left:772px;top:512px;letter-spacing:-0.105px;">Калькуляция</div>
<div class="t tb" style="left:869px;top:512px;letter-spacing:-0.174px;">Печать</div>
<svg style="left:907px;top:515px" width="7" height="4" viewBox="0 0 7 4"><path d="M0 0h6.600L3.300 3.300z" fill="#4d3d12"/></svg>
<div class="t tb" style="left:926px;top:512px;letter-spacing:-0.084px;">Провести</div>
<div class="t tb" style="left:989px;top:511px;letter-spacing:0;transform:scaleX(0.8974);transform-origin:0 0;font-weight:bold;font-size:13px;line-height:15px;height:15px">OK</div>
<div class="t tb" style="left:1020px;top:512px;letter-spacing:-0.064px;">Записать</div>
<div class="t tb" style="left:1099px;top:512px;letter-spacing:0.032px;">Закрыть</div>
<svg style="left:851px;top:509px" width="16" height="15" viewBox="0 0 16 15"><path d="M5.500 5.500L8 1h7l-2.200 4.500z" fill="#f6f6f6" stroke="#c4c4c4" stroke-width=".7"/><path d="M6.500 6L9 2.500h5.500L12.500 6z" fill="#fdfdfd" stroke="#d0d0d0" stroke-width=".5"/><path d="M0.500 9L5 4.800h10.500L11.500 9z" fill="#e6e6e6" stroke="#a8a8a8" stroke-width=".7"/><path d="M11.500 9L15.500 4.800V10.500L11.500 14.500z" fill="#8a8a8a"/><rect x="0.500" y="9" width="11" height="5.500" fill="#b4b4b4" stroke="#858585" stroke-width=".7"/><path d="M2 11.800h8" stroke="#fafafa" stroke-width="1.300"/><rect x="1.300" y="7.600" width="1.300" height="1.200" fill="#18c018"/></svg>
<svg style="left:1084px;top:512px" width="9" height="9" viewBox="0 0 9 9"><path d="M1.300 1.300L7.700 7.700M7.700 1.300L1.300 7.700" stroke="#1a86bd" stroke-width="2.900" stroke-linecap="round"/><path d="M1.500 1.200L4.500 4.200 7.500 1.200" stroke="#3fa8dc" stroke-width="1.200" fill="none" stroke-linecap="round"/></svg>
</body></html>
